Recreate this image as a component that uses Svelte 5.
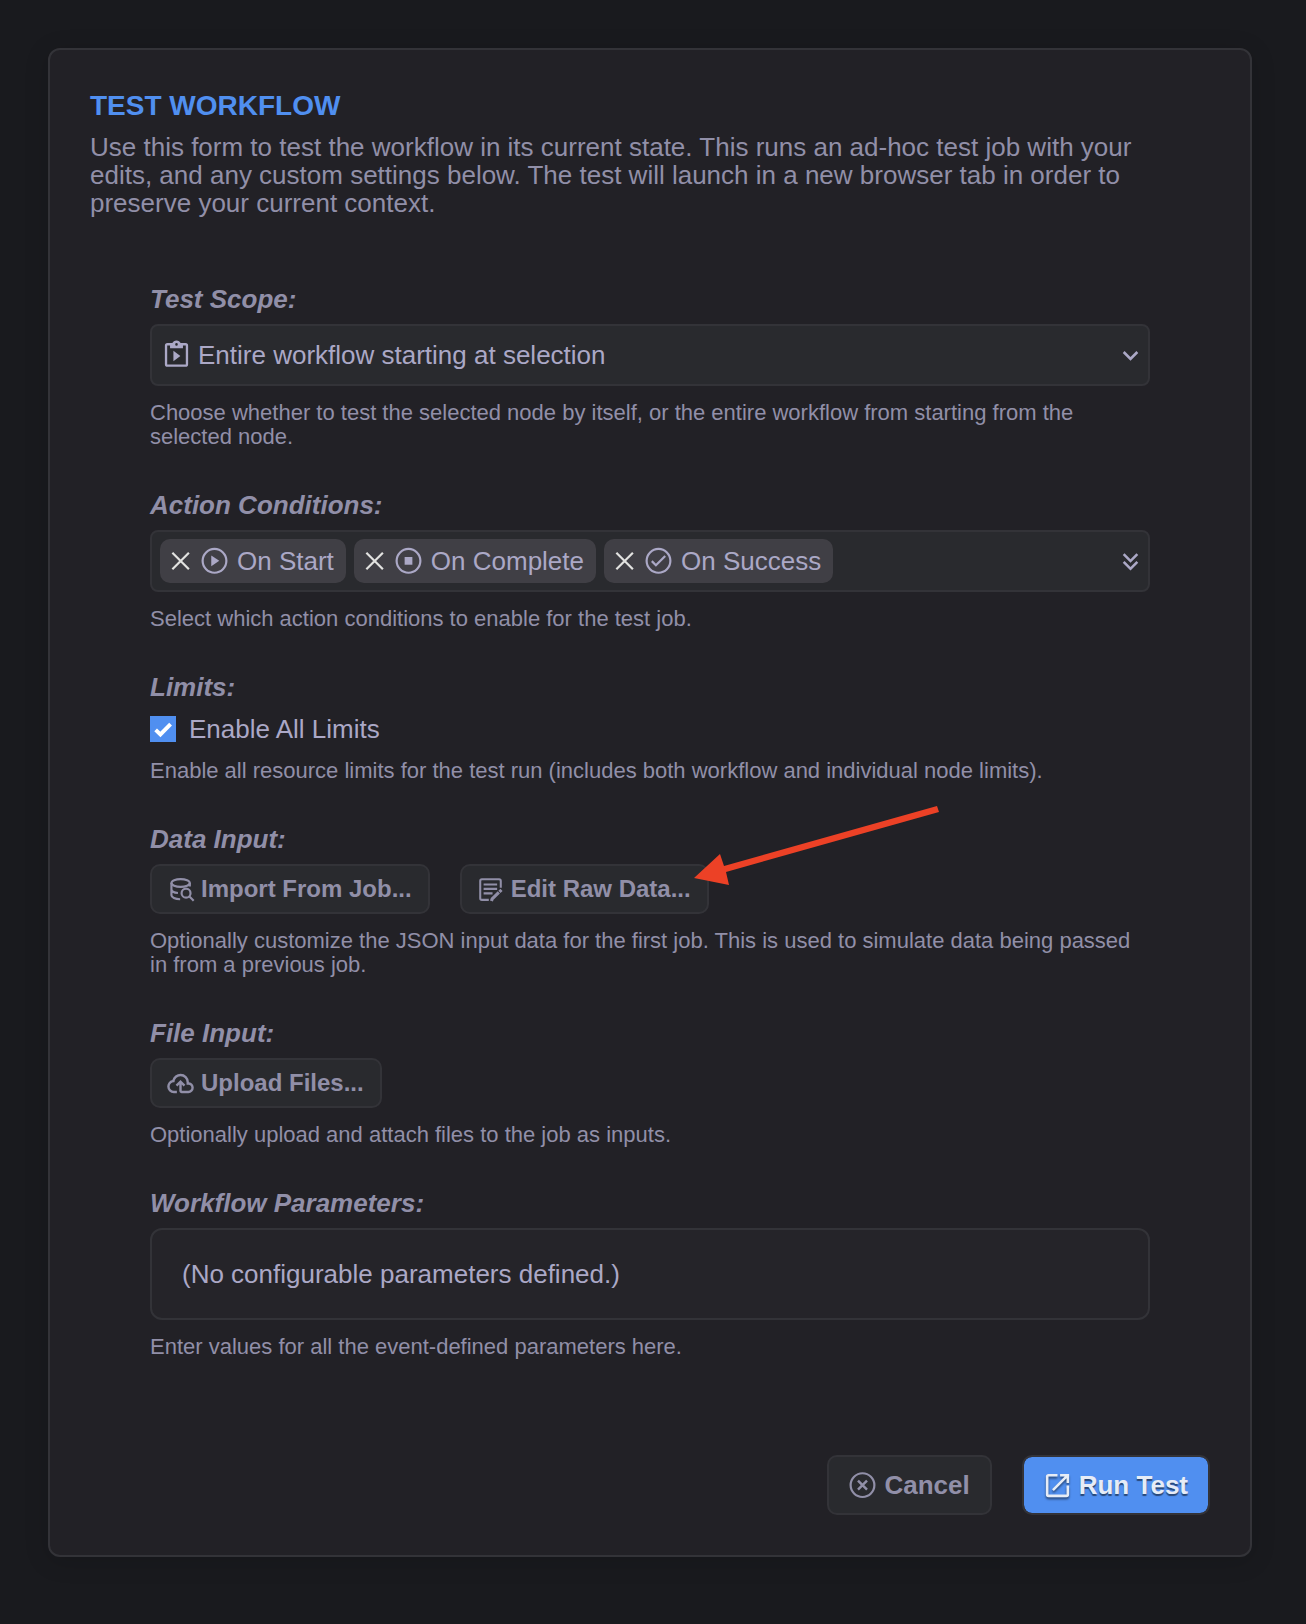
<script lang="ts">
	interface Condition {
		id: string;
		label: string;
		icon: string;
	}

	const scopes = [
		{ id: 'all', label: 'Entire workflow starting at selection' },
		{ id: 'single', label: 'Selected node only' }
	];

	let scope = $state('all');
	let limits = $state(true);
	let conditions = $state<Condition[]>([
		{ id: 'start', label: 'On Start', icon: 'play' },
		{ id: 'complete', label: 'On Complete', icon: 'stop' },
		{ id: 'success', label: 'On Success', icon: 'check' }
	]);

	function removeCondition(id: string) {
		conditions = conditions.filter((item) => item.id !== id);
	}
</script>

{#snippet icon(name: string)}
	<svg class="icon" viewBox="0 0 24 24" aria-hidden="true">
		{#if name === 'clipboard'}
			<path fill-rule="evenodd" d="M19,2.400H15.200C14.800,1.200 13.500,0.300 12,0.300C10.500,0.300 9.200,1.200 8.800,2.400H5A2,2 0 0,0 3,4.400V18.700A2,2 0 0,0 5,20.700H19A2,2 0 0,0 21,18.700V4.400A2,2 0 0,0 19,2.400M12,2.400A1,1 0 0,1 13,3.400A1,1 0 0,1 12,4.400A1,1 0 0,1 11,3.400A1,1 0 0,1 12,2.400M7,6.400H17V4.200H19.200V18.900H4.800V4.200H7V6.400M9.600,16.500V8.300L15,12.400L9.600,16.500Z" />
		{:else if name === 'chevron'}
			<path d="M7.41,8.58L12,13.17L16.59,8.58L18,10L12,16L6,10L7.41,8.58Z" />
		{:else if name === 'chevrons'}
			<path d="M16.59,5.59L18,7L12,13L6,7L7.41,5.59L12,10.17L16.59,5.59M16.59,11.59L18,13L12,19L6,13L7.41,11.59L12,16.17L16.59,11.59Z" />
		{:else if name === 'close'}
			<path class="line" stroke-width="1.7" d="M5.7 5.2 18.5 18M18.500 5.2 5.700 18" />
		{:else if name === 'play'}
			<circle class="line" cx="12" cy="11.5" r="9.2" stroke-width="1.7" />
			<path d="M9.5 7.400v8.200l6.200-4.100z" />
		{:else if name === 'stop'}
			<circle class="line" cx="12" cy="11.5" r="9.2" stroke-width="1.7" />
			<path d="M9 8.500h6v6H9z" />
		{:else if name === 'check'}
			<circle class="line" cx="12" cy="11.5" r="9.2" stroke-width="1.7" />
			<path class="line" stroke-width="1.7" d="M6.8 11.700l3.200 3.200 7.200-7.200" />
		{:else if name === 'cancel'}
			<circle class="line" cx="12" cy="11.7" r="9.2" stroke-width="1.7" />
			<path class="line" stroke-width="1.9" d="M8.500 8.200l7 7M15.500 8.200l-7 7" />
		{:else if name === 'tick'}
			<path class="line" stroke-width="3.6" d="M5.2 12.8l4.400 4.200L19 7.400" />
		{:else if name === 'database'}
			<g class="line" stroke-width="1.8">
				<ellipse cx="12.100" cy="6.600" rx="7.600" ry="3.200" />
				<path d="M4.500 6.600v10.200c0 1.700 3 3.200 7.200 3.300M4.500 12c.2 1.600 2.600 2.700 5.400 2.900M19.700 6.600v3" />
				<circle cx="16.600" cy="15" r="3.700" />
				<path d="M19.200 17.600l3.700 3.700" />
			</g>
		{:else if name === 'edit'}
			<g class="line" stroke-width="1.7">
				<path d="M10.600 20.600H4.900c-.8 0-1.400-.6-1.400-1.400V4.900c0-.8.6-1.400 1.400-1.400h14.200c.8 0 1.400.6 1.400 1.400v5.700M6.300 7.800h11.200M6.300 11.500h11.200M6.300 15.200h7.400" />
				<path stroke-width="2.600" d="M12.800 21.500l.6-1.800 5.500-5.300M19.400 13.900l1.700-1.600" />
			</g>
		{:else if name === 'upload'}
			<path d="M6.5 20Q4.22 20 2.61 18.43 1 16.85 1 14.58 1 12.63 2.17 11.1 3.35 9.57 5.25 9.15 5.88 6.85 7.75 5.43 9.63 4 12 4 14.93 4 16.96 6.04 19 8.07 19 11 20.73 11.2 21.86 12.5 23 13.78 23 15.5 23 17.38 21.69 18.69 20.38 20 18.5 20H13Q12.18 20 11.59 19.41 11 18.83 11 18V12.85L9.4 14.4 8 13 12 9 16 13 14.6 14.4 13 12.85V18H18.5Q19.55 18 20.27 17.27 21 16.55 21 15.5 21 14.45 20.27 13.73 19.55 13 18.5 13H17V11Q17 8.93 15.54 7.46 14.08 6 12 6 9.93 6 8.46 7.46 7 8.93 7 11H6.5Q5.05 11 4.03 12.03 3 13.05 3 14.5 3 15.95 4.03 17 5.05 18 6.5 18H9V20Z" />
		{:else if name === 'launch'}
			<path d="M14,3V5H17.59L7.76,14.83L9.17,16.24L19,6.41V10H21V3M19,19H5V5H12V3H5C3.89,3 3,3.9 3,5V19A2,2 0 0,0 5,21H19A2,2 0 0,0 21,19V12H19V19Z" />
		{/if}
	</svg>
{/snippet}

<main class="page">
	<form class="dialog" onsubmit={(event) => event.preventDefault()}>
		<header>
			<h1>TEST WORKFLOW</h1>
			<p>
				Use this form to test the workflow in its current state. This runs an ad-hoc test job with
				your edits, and any custom settings below. The test will launch in a new browser tab in
				order to preserve your current context.
			</p>
		</header>

		<div class="fields">
			<section class="field">
				<label class="label" for="scope">Test Scope:</label>
				<div class="select">
					{@render icon('clipboard')}
					<select id="scope" bind:value={scope}>
						{#each scopes as item (item.id)}
							<option value={item.id}>{item.label}</option>
						{/each}
					</select>
					{@render icon('chevron')}
				</div>
				<p class="caption">
					Choose whether to test the selected node by itself, or the entire workflow from starting
					from the selected node.
				</p>
			</section>

			<section class="field">
				<h2 class="label">Action Conditions:</h2>
				<div class="multi">
					<ul>
						{#each conditions as item (item.id)}
							<li>
								<button
									type="button"
									class="remove"
									aria-label="Remove {item.label}"
									onclick={() => removeCondition(item.id)}
								>
									{@render icon('close')}
								</button>
								{@render icon(item.icon)}
								<span>{item.label}</span>
							</li>
						{/each}
					</ul>
					<button type="button" class="expand" aria-label="Choose conditions">
						{@render icon('chevrons')}
					</button>
				</div>
				<p class="caption">Select which action conditions to enable for the test job.</p>
			</section>

			<section class="field">
				<h2 class="label">Limits:</h2>
				<label class="checkbox">
					<span class="box">
						<input type="checkbox" bind:checked={limits} />
						{#if limits}{@render icon('tick')}{/if}
					</span>
					Enable All Limits
				</label>
				<p class="caption">
					Enable all resource limits for the test run (includes both workflow and individual node
					limits).
				</p>
			</section>

			<section class="field">
				<h2 class="label">Data Input:</h2>
				<div class="buttons">
					<button type="button" class="btn">{@render icon('database')}Import From Job...</button>
					<div class="pointed">
						<button type="button" class="btn">{@render icon('edit')}Edit Raw Data...</button>
						<svg class="arrow" viewBox="0 0 250 90" aria-hidden="true">
							<path d="M4 78 30 54 34 66 247 6 249 12 36 72 39 85z" />
						</svg>
					</div>
				</div>
				<p class="caption">
					Optionally customize the JSON input data for the first job. This is used to simulate data
					being passed in from a previous job.
				</p>
			</section>

			<section class="field">
				<h2 class="label">File Input:</h2>
				<div class="buttons">
					<button type="button" class="btn">{@render icon('upload')}Upload Files...</button>
				</div>
				<p class="caption">Optionally upload and attach files to the job as inputs.</p>
			</section>

			<section class="field">
				<h2 class="label">Workflow Parameters:</h2>
				<div class="params">(No configurable parameters defined.)</div>
				<p class="caption">Enter values for all the event-defined parameters here.</p>
			</section>
		</div>

		<footer>
			<button type="button" class="btn btn-lg">{@render icon('cancel')}Cancel</button>
			<button type="submit" class="btn btn-lg btn-primary">{@render icon('launch')}Run Test</button>
		</footer>
	</form>
</main>

<style>
	:global(body) {
		margin: 0;
		background: #191a1e;
	}

	.page {
		--border: #333338;
		--control: #292a2e;
		--text: #aba8c6;
		--muted: #918fa8;
		padding: 48px 54px 68px 48px;
		color: var(--muted);
		font-family: 'Liberation Sans', Arial, sans-serif;
		font-size: 26px;
		line-height: 28px;
	}

	h1,
	h2,
	p,
	ul {
		margin: 0;
		padding: 0;
	}

	button,
	select,
	input {
		margin: 0;
		font: inherit;
		color: inherit;
	}

	button {
		cursor: pointer;
	}

	.icon {
		flex: none;
		display: block;
		width: 31px;
		height: 31px;
		fill: currentColor;
	}

	.line {
		fill: none;
		stroke: currentColor;
	}

	.dialog {
		padding: 40px;
		border: 2px solid var(--border);
		border-radius: 12px;
		background: #222126;
		box-shadow: 0 4px 24px rgba(0, 0, 0, 0.15);
	}

	header {
		padding-right: 40px;
	}

	h1 {
		margin-bottom: 11px;
		color: #508ff0;
		font-size: 28px;
		line-height: 32px;
		font-weight: bold;
	}

	.fields {
		display: flex;
		flex-direction: column;
		gap: 42px;
		padding: 68px 60px 96px;
	}

	.label {
		display: block;
		margin-bottom: 11px;
		font-size: 26px;
		line-height: 28px;
		font-weight: bold;
		font-style: italic;
	}

	.caption {
		margin-top: 15px;
		font-size: 22px;
		line-height: 24px;
	}

	.select {
		display: grid;
		grid-template-columns: 46px 1fr 42px;
		align-items: center;
		color: var(--text);
	}

	.select select {
		grid-area: 1 / 1 / 2 / 4;
		width: 100%;
		height: 62px;
		padding: 0 44px 0 46px;
		border: 2px solid var(--border);
		border-radius: 8px;
		background: var(--control);
		appearance: none;
	}

	.select .icon {
		z-index: 1;
		grid-area: 1 / 1;
		justify-self: end;
		margin-right: 4px;
		pointer-events: none;
	}

	.select select + .icon {
		grid-area: 1 / 3;
	}

	.multi {
		display: flex;
		align-items: center;
		justify-content: space-between;
		min-height: 58px;
		padding: 0 2px 0 8px;
		border: 2px solid var(--border);
		border-radius: 8px;
		background: var(--control);
		color: var(--text);
	}

	.multi ul {
		display: flex;
		flex-wrap: wrap;
		gap: 8px;
		list-style: none;
	}

	.multi li {
		display: flex;
		align-items: center;
		gap: 3px;
		height: 44px;
		padding: 0 12px 0 5px;
		border-radius: 10px;
		background: #403f45;
	}

	.multi li span {
		margin-left: 4px;
	}

	.remove,
	.expand {
		padding: 0;
		border: 0;
		background: none;
	}

	.remove {
		color: #e2e2e0;
	}

	.checkbox {
		display: flex;
		align-items: center;
		gap: 13px;
		padding: 3px 0 1px;
		color: var(--text);
	}

	.box {
		display: grid;
		place-items: center;
		color: #fff;
	}

	.box input {
		grid-area: 1 / 1;
		width: 26px;
		height: 26px;
		background: #404046;
		appearance: none;
	}

	.box input:checked {
		background: #508ff0;
	}

	.box .icon {
		grid-area: 1 / 1;
		width: 26px;
		height: 26px;
		pointer-events: none;
	}

	.buttons {
		display: flex;
		gap: 30px;
	}

	.btn {
		display: flex;
		align-items: center;
		gap: 6px;
		height: 50px;
		padding: 0 16px 0 14px;
		border: 2px solid var(--border);
		border-radius: 10px;
		background: var(--control);
		font-size: 24px;
		font-weight: bold;
		white-space: nowrap;
	}

	.btn .icon {
		width: 29px;
		height: 29px;
	}

	.btn-lg {
		height: 60px;
		padding: 0 20px 0 18px;
		font-size: 26px;
	}

	.btn-lg .icon {
		width: 31px;
		height: 31px;
	}

	.btn-primary {
		background: #508ff0;
		background-clip: padding-box;
		color: #e6ecf6;
		text-shadow: 0 2px 1px rgba(0, 0, 0, 0.5);
	}

	.btn-primary .icon {
		filter: drop-shadow(0 2px 1px rgba(0, 0, 0, 0.5));
	}

	.pointed {
		position: relative;
	}

	.arrow {
		position: absolute;
		left: 230px;
		bottom: 24px;
		width: 250px;
		height: 90px;
		fill: #ec4126;
		pointer-events: none;
	}

	.params {
		padding: 30px;
		border: 2px solid var(--border);
		border-radius: 12px;
		background: #252429;
		color: var(--text);
	}

	footer {
		display: flex;
		justify-content: flex-end;
		gap: 30px;
	}
</style>
